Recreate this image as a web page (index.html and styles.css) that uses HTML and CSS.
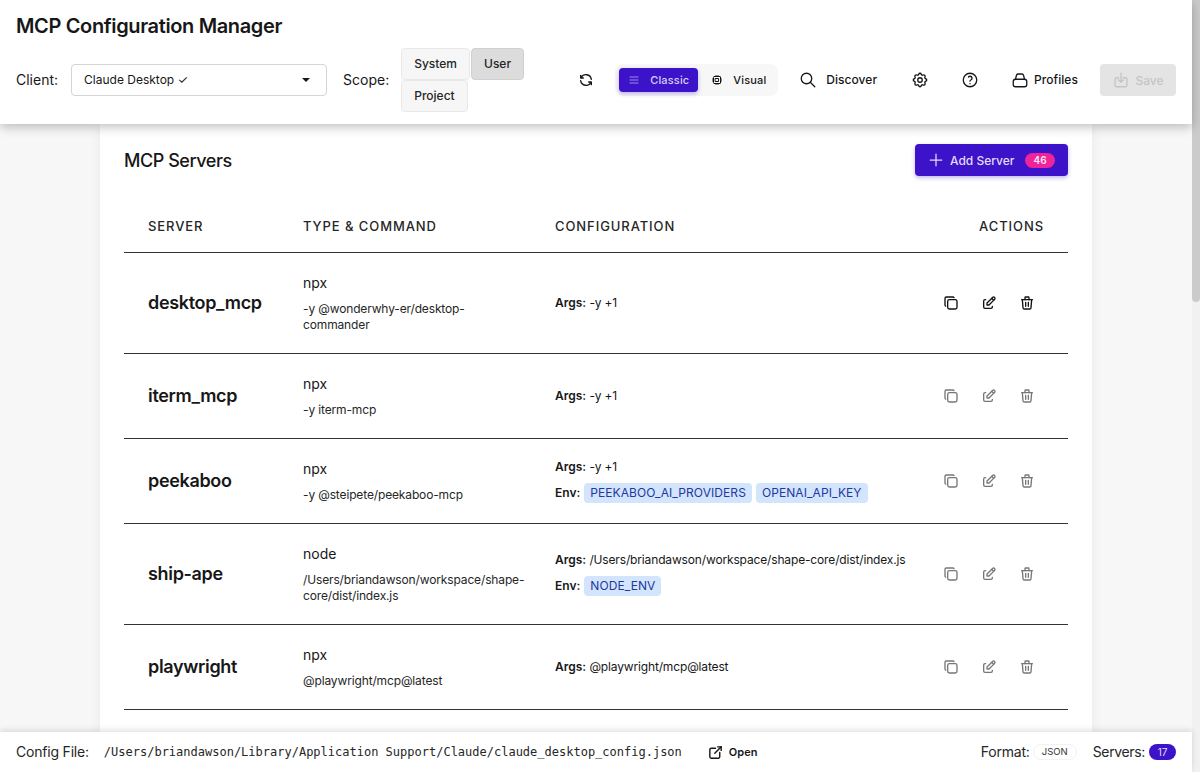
FILE: index.html
```html
<!DOCTYPE html>
<html lang="en">
<head>
<meta charset="utf-8">
<title>MCP Configuration Manager</title>
<link rel="stylesheet" href="styles.css">
</head>
<body>
<svg class="sprite" xmlns="http://www.w3.org/2000/svg">
  <symbol id="i-refresh" viewBox="0 0 24 24"><path d="M20 11a8.1 8.1 0 0 0 -15.5 -2m-.5 -4v4h4"/><path d="M4 13a8.1 8.1 0 0 0 15.5 2m.5 4v-4h-4"/></symbol>
  <symbol id="i-list" viewBox="0 0 24 24"><path d="M4 6h16M4 12h16M4 18h16"/></symbol>
  <symbol id="i-cpu" viewBox="0 0 24 24"><path d="M5 6a1 1 0 0 1 1 -1h12a1 1 0 0 1 1 1v12a1 1 0 0 1 -1 1h-12a1 1 0 0 1 -1 -1z"/><path d="M9 9h6v6h-6z"/><path d="M3 10h2M3 14h2M10 3v2M14 3v2M21 10h-2M21 14h-2M14 21v-2M10 21v-2"/></symbol>
  <symbol id="i-search" viewBox="0 0 24 24"><circle cx="10" cy="10" r="7"/><path d="M21 21l-6 -6"/></symbol>
  <symbol id="i-gear" viewBox="0 0 24 24"><path d="M10.325 4.317c.426 -1.756 2.924 -1.756 3.35 0a1.724 1.724 0 0 0 2.573 1.066c1.543 -.94 3.31 .826 2.37 2.37a1.724 1.724 0 0 0 1.065 2.572c1.756 .426 1.756 2.924 0 3.35a1.724 1.724 0 0 0 -1.066 2.573c.94 1.543 -.826 3.31 -2.37 2.37a1.724 1.724 0 0 0 -2.572 1.065c-.426 1.756 -2.924 1.756 -3.35 0a1.724 1.724 0 0 0 -2.573 -1.066c-1.543 .94 -3.31 -.826 -2.37 -2.37a1.724 1.724 0 0 0 -1.065 -2.572c-1.756 -.426 -1.756 -2.924 0 -3.35a1.724 1.724 0 0 0 1.066 -2.573c-.94 -1.543 .826 -3.31 2.37 -2.37c1 .608 2.296 .07 2.572 -1.065z"/><circle cx="12" cy="12" r="3"/></symbol>
  <symbol id="i-help" viewBox="0 0 24 24"><circle cx="12" cy="12" r="9"/><path d="M12 17v.01"/><path d="M12 13.5a1.5 1.5 0 0 1 1 -1.5a2.6 2.6 0 1 0 -3 -4"/></symbol>
  <symbol id="i-profile" viewBox="0 0 24 24"><path d="M3 14a3 3 0 0 1 3 -3h12a3 3 0 0 1 3 3v4a3 3 0 0 1 -3 3h-12a3 3 0 0 1 -3 -3z"/><path d="M6 11l1.2 -5a2.5 2.5 0 0 1 2.4 -2h4.8a2.5 2.5 0 0 1 2.4 2l1.2 5"/></symbol>
  <symbol id="i-save" viewBox="0 0 24 24"><path d="M9 9h-3a2 2 0 0 0 -2 2v8a2 2 0 0 0 2 2h12a2 2 0 0 0 2 -2v-8a2 2 0 0 0 -2 -2h-3"/><path d="M12 3v12M8.5 11.5l3.5 3.5l3.5 -3.5"/></symbol>
  <symbol id="i-plus" viewBox="0 0 24 24"><path d="M12 5v14M5 12h14"/></symbol>
  <symbol id="i-copy" viewBox="0 0 24 24"><path d="M7 9.667a2.667 2.667 0 0 1 2.667 -2.667h8.666a2.667 2.667 0 0 1 2.667 2.667v8.666a2.667 2.667 0 0 1 -2.667 2.667h-8.666a2.667 2.667 0 0 1 -2.667 -2.667z"/><path d="M4.012 16.737a2.005 2.005 0 0 1 -1.012 -1.737v-10c0 -1.1 .9 -2 2 -2h10c.75 0 1.158 .385 1.5 1"/></symbol>
  <symbol id="i-edit" viewBox="0 0 24 24"><path d="M7 7h-1a2 2 0 0 0 -2 2v9a2 2 0 0 0 2 2h9a2 2 0 0 0 2 -2v-1"/><path d="M20.385 6.585a2.1 2.1 0 0 0 -2.97 -2.97l-8.415 8.385v3h3l8.385 -8.415z"/><path d="M16 5l3 3"/></symbol>
  <symbol id="i-trash" viewBox="0 0 24 24"><path d="M4 7h16M10 11v6M14 11v6"/><path d="M5 7l1 12a2 2 0 0 0 2 2h8a2 2 0 0 0 2 -2l1 -12"/><path d="M9 7v-3a1 1 0 0 1 1 -1h4a1 1 0 0 1 1 1v3"/></symbol>
  <symbol id="i-open" viewBox="0 0 24 24"><path d="M12 6h-6a2 2 0 0 0 -2 2v10a2 2 0 0 0 2 2h10a2 2 0 0 0 2 -2v-6"/><path d="M11 13l9 -9"/><path d="M15 4h5v5"/></symbol>
</svg>

<div class="app">
  <header class="topbar">
    <h1 class="app-title">MCP Configuration Manager</h1>
    <div class="toolbar">
      <span class="field-label">Client:</span>
      <div class="select">
        <span>Claude Desktop ✓</span>
        <span class="select-caret"></span>
      </div>
      <span class="field-label scope-label">Scope:</span>
      <div class="scope-group">
        <button class="scope-btn">System</button>
        <button class="scope-btn is-active">User</button>
        <button class="scope-btn">Project</button>
      </div>
      <button class="icon-btn refresh-btn"><svg class="ic ic-16"><use href="#i-refresh"/></svg></button>
      <div class="view-toggle">
        <button class="view-btn is-active"><svg class="ic ic-12"><use href="#i-list"/></svg>Classic</button>
        <button class="view-btn"><svg class="ic ic-12"><use href="#i-cpu"/></svg>Visual</button>
      </div>
      <button class="tool-btn discover-btn"><svg class="ic ic-18"><use href="#i-search"/></svg>Discover</button>
      <button class="icon-btn gear-btn"><svg class="ic ic-18"><use href="#i-gear"/></svg></button>
      <button class="icon-btn help-btn"><svg class="ic ic-18"><use href="#i-help"/></svg></button>
      <button class="tool-btn profiles-btn"><svg class="ic ic-18"><use href="#i-profile"/></svg>Profiles</button>
      <button class="save-btn"><svg class="ic ic-18"><use href="#i-save"/></svg>Save</button>
    </div>
  </header>

  <main class="main">
    <section class="card">
      <div class="card-head">
        <h2 class="card-title">MCP Servers</h2>
        <button class="add-btn"><svg class="ic ic-20"><use href="#i-plus"/></svg>Add Server<span class="add-count">46</span></button>
      </div>
      <div class="table">
        <div class="row row-head">
          <div class="cell">SERVER</div>
          <div class="cell">TYPE &amp; COMMAND</div>
          <div class="cell">CONFIGURATION</div>
          <div class="cell cell-right">ACTIONS</div>
        </div>

        <div class="row">
          <div class="cell name">desktop_mcp</div>
          <div class="cell"><div class="cmd">npx</div><div class="args">-y @wonderwhy-er/desktop-commander</div></div>
          <div class="cell conf"><div class="conf-line"><b>Args:</b> -y +1</div></div>
          <div class="cell actions is-on">
            <button class="act"><svg class="ic ic-16"><use href="#i-copy"/></svg></button>
            <button class="act"><svg class="ic ic-16"><use href="#i-edit"/></svg></button>
            <button class="act"><svg class="ic ic-16"><use href="#i-trash"/></svg></button>
          </div>
        </div>

        <div class="row">
          <div class="cell name">iterm_mcp</div>
          <div class="cell"><div class="cmd">npx</div><div class="args">-y iterm-mcp</div></div>
          <div class="cell conf"><div class="conf-line"><b>Args:</b> -y +1</div></div>
          <div class="cell actions">
            <button class="act"><svg class="ic ic-16"><use href="#i-copy"/></svg></button>
            <button class="act"><svg class="ic ic-16"><use href="#i-edit"/></svg></button>
            <button class="act"><svg class="ic ic-16"><use href="#i-trash"/></svg></button>
          </div>
        </div>

        <div class="row">
          <div class="cell name">peekaboo</div>
          <div class="cell"><div class="cmd">npx</div><div class="args">-y @steipete/peekaboo-mcp</div></div>
          <div class="cell conf">
            <div class="conf-line"><b>Args:</b> -y +1</div>
            <div class="conf-line env"><b>Env:</b><span class="tag">PEEKABOO_AI_PROVIDERS</span><span class="tag">OPENAI_API_KEY</span></div>
          </div>
          <div class="cell actions">
            <button class="act"><svg class="ic ic-16"><use href="#i-copy"/></svg></button>
            <button class="act"><svg class="ic ic-16"><use href="#i-edit"/></svg></button>
            <button class="act"><svg class="ic ic-16"><use href="#i-trash"/></svg></button>
          </div>
        </div>

        <div class="row">
          <div class="cell name">ship-ape</div>
          <div class="cell"><div class="cmd">node</div><div class="args">/Users/briandawson/workspace/shape-core/dist/index.js</div></div>
          <div class="cell conf">
            <div class="conf-line"><b>Args:</b> /Users/briandawson/workspace/shape-core/dist/index.js</div>
            <div class="conf-line env"><b>Env:</b><span class="tag">NODE_ENV</span></div>
          </div>
          <div class="cell actions">
            <button class="act"><svg class="ic ic-16"><use href="#i-copy"/></svg></button>
            <button class="act"><svg class="ic ic-16"><use href="#i-edit"/></svg></button>
            <button class="act"><svg class="ic ic-16"><use href="#i-trash"/></svg></button>
          </div>
        </div>

        <div class="row">
          <div class="cell name">playwright</div>
          <div class="cell"><div class="cmd">npx</div><div class="args">@playwright/mcp@latest</div></div>
          <div class="cell conf"><div class="conf-line"><b>Args:</b> @playwright/mcp@latest</div></div>
          <div class="cell actions">
            <button class="act"><svg class="ic ic-16"><use href="#i-copy"/></svg></button>
            <button class="act"><svg class="ic ic-16"><use href="#i-edit"/></svg></button>
            <button class="act"><svg class="ic ic-16"><use href="#i-trash"/></svg></button>
          </div>
        </div>
      </div>
    </section>
  </main>

  <footer class="footer">
    <span class="foot-label">Config File:</span>
    <code class="foot-path">/Users/briandawson/Library/Application Support/Claude/claude_desktop_config.json</code>
    <button class="open-btn"><svg class="ic ic-17"><use href="#i-open"/></svg>Open</button>
    <span class="foot-spacer"></span>
    <span class="foot-label">Format:</span>
    <span class="format-pill">JSON</span>
    <span class="foot-label servers-label">Servers:</span>
    <span class="count-pill">17</span>
  </footer>
</div>

<div class="scrollbar"><div class="scroll-thumb"></div></div>
</body>
</html>
```

FILE: styles.css
```css
* { box-sizing: border-box; }
html, body { margin: 0; height: 100%; overflow: hidden; }
body {
  display: flex;
  font-family: Inter, "Liberation Sans", sans-serif;
  color: #171717;
  background: #f7f7f7;
}
button { font-family: inherit; border: 0; background: none; padding: 0; color: inherit; }
.sprite { display: none; }
.ic { fill: none; stroke: currentColor; stroke-width: 2; stroke-linecap: round; stroke-linejoin: round; flex: none; display: block; }
.ic-12 { width: 12px; height: 12px; }
.ic-16 { width: 16px; height: 16px; }
.ic-17 { width: 17px; height: 17px; }
.ic-18 { width: 18px; height: 18px; stroke-width: 1.75; }
.ic-20 { width: 20px; height: 20px; stroke-width: 1.5; }

.app { flex: 1; min-width: 0; height: 100vh; display: flex; flex-direction: column; }
.scrollbar { width: 8px; height: 100vh; background: #f1f1f1; flex: none; }
.scroll-thumb { height: 302px; background: #cbcbcb; border-radius: 0 0 4px 4px; }

.topbar {
  height: 124px;
  flex: none;
  background: #fff;
  padding: 16px 16px 0;
  box-shadow: 0 3px 10px rgba(0,0,0,.25);
  position: relative;
  z-index: 2;
}
.app-title { margin: 0; font-size: 20px; line-height: 20px; font-weight: 600; letter-spacing: -.36px; }
.toolbar { display: flex; align-items: center; height: 64px; margin-top: 12px; }
.field-label { font-size: 14px; line-height: 20px; }
.select {
  width: 256px; height: 32px; margin-left: 13px;
  display: flex; align-items: center; justify-content: space-between;
  padding: 0 16px 1px 12px;
  border: 1px solid #d4d4d4; border-radius: 4px; background: #fff;
  font-size: 12px;
}
.select-caret { width: 0; height: 0; border-left: 4px solid transparent; border-right: 4px solid transparent; border-top: 4px solid #171717; }
.scope-label { margin-left: 16px; }
.scope-group { width: 124px; margin-left: 12px; display: flex; flex-wrap: wrap; column-gap: 1px; row-gap: 0; }
.scope-btn {
  height: 32px; padding: 0 12px 2px;
  background: #f6f6f6; border: 1px solid #e8e8e8; border-radius: 4px;
  font-size: 12px; font-weight: 500; color: #262626;
}
.scope-btn.is-active { background: #dcdcdc; border-color: #d0d0d0; }
.icon-btn { width: 32px; height: 32px; display: flex; align-items: center; justify-content: center; }
.refresh-btn { margin-left: 45px; }
.view-toggle { margin-left: 13px; height: 32px; width: 163px; background: #f7f7f7; border-radius: 8px; padding: 4px; display: flex; gap: 4px; }
.view-btn { height: 24px; padding: 0 9px; display: flex; align-items: center; gap: 10px; border-radius: 4px; font-size: 11px; font-weight: 500; letter-spacing: .15px; }
.view-btn.is-active { background: #3c13c8; color: #d6cdf6; box-shadow: 0 2px 4px rgba(60,19,200,.3); }
.view-btn.is-active .ic { opacity: .65; }
.tool-btn { height: 32px; display: flex; align-items: center; font-size: 12px; font-weight: 500; letter-spacing: .05px; padding-bottom: 1px; }
.discover-btn { margin-left: 21px; gap: 9px; }
.gear-btn { margin-left: 27px; }
.help-btn { margin-left: 18px; }
.profiles-btn { margin-left: 25px; gap: 5px; }
.save-btn { margin-left: 22px; width: 76px; height: 32px; display: flex; align-items: center; justify-content: center; gap: 5px; background: #e4e4e4; border-radius: 4px; color: #c4c4c4; font-size: 12px; font-weight: 500; }

.main { flex: 1; min-height: 0; overflow: hidden; display: flex; justify-content: center; }
.card { width: 992px; background: #fff; padding: 20px 24px; box-shadow: 0 1px 12px rgba(0,0,0,.06); }
.card-head { display: flex; align-items: center; justify-content: space-between; height: 32px; }
.card-title { margin: 0; font-size: 18px; font-weight: 500; letter-spacing: -.45px; }
.add-btn { width: 153px; height: 32px; display: flex; align-items: center; padding: 0 13px 0 11px; gap: 4px; background: #3c13c8; color: #e4dcfb; border-radius: 4px; font-size: 12px; font-weight: 500; box-shadow: 0 2px 4px rgba(60,19,200,.3); }
.add-count { margin-left: auto; width: 30px; height: 15px; line-height: 15px; text-align: center; border-radius: 8px; background: #f0249a; color: #fde6f4; font-size: 10px; font-weight: 600; }

.table { margin-top: 28px; }
.row { display: grid; grid-template-columns: 155px 252px minmax(0, 1fr) 164px; border-bottom: 1px solid #2f3437; }
.row-head { height: 49px; align-items: center; font-size: 13px; font-weight: 500; letter-spacing: .92px; color: #262626; padding-bottom: 4px; }
.cell { padding: 20px 24px; }
.row-head .cell { padding: 0 24px; }
.cell-right { text-align: right; }
.name { display: flex; align-items: center; padding-top: 19px; padding-bottom: 21px; font-size: 18px; font-weight: 600; letter-spacing: -.33px; }
.cmd { font-size: 14px; line-height: 20px; }
.args { font-size: 12px; line-height: 16px; margin-top: 8px; color: #262626; letter-spacing: -.14px; }
.conf { display: flex; flex-direction: column; justify-content: center; padding-top: 0; padding-bottom: 0; padding-right: 0; gap: 4px; font-size: 12px; }
.conf-line { line-height: 22px; white-space: nowrap; letter-spacing: -.15px; }
.conf-line b { font-weight: 600; letter-spacing: 0; }
.env { display: flex; align-items: center; gap: 4px; margin-bottom: 2px; }
.tag { height: 20px; line-height: 20px; padding: 0 6px; background: #d3e4fd; color: #23389f; border-radius: 4px; font-size: 12px; letter-spacing: .08px; }
.actions { display: flex; align-items: center; justify-content: flex-end; gap: 4px; padding-top: 0; padding-bottom: 0; color: #777; }
.actions.is-on { color: #111; }
.act { width: 34px; height: 28px; display: flex; align-items: center; justify-content: center; }

.footer {
  height: 40px; flex: none; background: #fff;
  display: flex; align-items: center; padding: 0 16px;
  box-shadow: 0 -2px 6px rgba(0,0,0,.12);
  position: relative; z-index: 2;
  font-size: 14px;
}
.foot-label { color: #262626; line-height: 20px; letter-spacing: -.2px; }
.foot-path { margin-left: 15px; font-family: "DejaVu Sans Mono", monospace; font-size: 12px; color: #262626; }
.open-btn { margin-left: 25px; display: flex; align-items: center; gap: 5px; font-size: 11px; font-weight: 600; }
.foot-spacer { flex: 1; }
.format-pill { margin-left: 3px; width: 44px; text-align: center; height: 16px; line-height: 14px; border: 1px solid #f2f2f2; border-radius: 8px; font-size: 9.5px; color: #333; }
.servers-label { margin-left: 16px; letter-spacing: -.35px; }
.count-pill { margin-left: 4px; width: 27px; height: 16px; line-height: 16px; text-align: center; border-radius: 8px; background: #3c13c8; color: #e4dcfb; font-size: 10px; }
```
